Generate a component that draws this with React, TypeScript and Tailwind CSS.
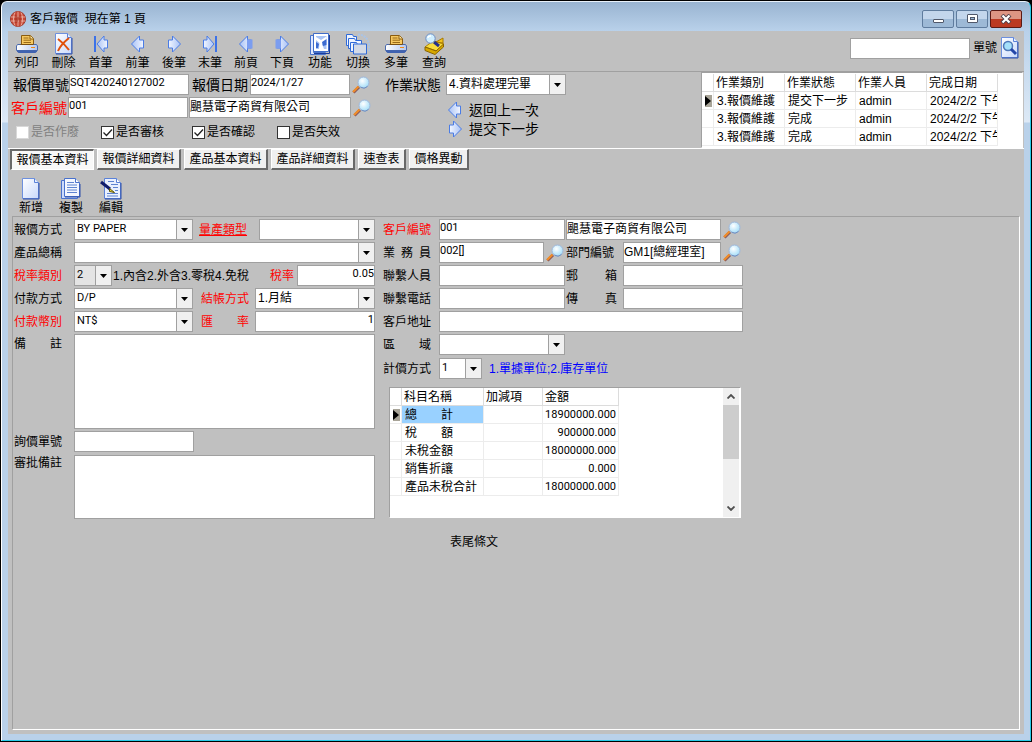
import React, { useState } from 'react'

const latin = "text-[11px] font-['Roboto','Noto_Sans_CJK_TC',sans-serif]"

/* ---------- icons ---------- */

function PrinterIcon() {
  return (
    <svg width="22" height="20" viewBox="0 0 22 20" aria-hidden="true">
      <defs>
        <linearGradient id="tray" x1="0" x2="1">
          <stop offset="0" stopColor="#ffffff" />
          <stop offset="1" stopColor="#b4c8ee" />
        </linearGradient>
      </defs>
      <path d="M5.500 10.500v-9h9l3 3v6z" fill="#f6c860" stroke="#8a5c10" />
      <path d="M14 1.500v3.500h3.500" fill="#ffe9a8" stroke="#8a5c10" />
      <path d="M7.500 4h5M7.500 6.200h7.500M7.500 8.500h7.500" stroke="#9a6a18" />
      <path d="M1.500 10.500h19l1 1.500v4.500H.5V12z" fill="url(#tray)" stroke="#4a69ac" />
      <path d="M4.500 10.500h13" stroke="#7a5010" />
      <path d="M15 13.500h4" stroke="#f08a1c" />
      <path d="M1 16.500h20v1l-1.500 1.500H2.500L1 17.500z" fill="#3f62b0" />
    </svg>
  )
}

function Page({ children }: { children?: React.ReactNode }) {
  return (
    <svg width="20" height="22" viewBox="0 0 20 22" aria-hidden="true">
      <defs>
        <linearGradient id="paper" x1="0" y1="0" x2="1" y2="1">
          <stop offset="0" stopColor="#ffffff" />
          <stop offset="1" stopColor="#c9d9fb" />
        </linearGradient>
      </defs>
      <path d="M1.500.5h12l4 4v16h-16z" fill="url(#paper)" stroke="#6d90de" />
      <path d="M18 5v16H2" fill="none" stroke="#2f4fa8" />
      <path d="M13.500.5v4h4" fill="#e6efff" stroke="#5b82d8" />
      {children}
    </svg>
  )
}

function DeleteIcon() {
  return (
    <Page>
      <path d="M4 6c4 3 8 7 11 11M15 5C10 9 6 13 4 18" fill="none" stroke="#e0500c" strokeWidth="2" />
    </Page>
  )
}

function EditIcon() {
  return (
    <svg width="22" height="22" viewBox="0 0 22 22" aria-hidden="true">
      <path d="M4.500.5h12l4 4v16h-16z" fill="#eaf1ff" stroke="#5b82d8" />
      <path d="M21 5v16H5" fill="none" stroke="#2f4fa8" />
      <path d="M16.500.5v4h4" fill="#fff" stroke="#5b82d8" />
      <path d="M8 3.500h6M11 6.500h7M13 9.500h5M15 12.500h3M7 15.500h11M7 18h11" stroke="#5f84d0" />
      <path d="M1 4l9 7" stroke="#101c6c" strokeWidth="3" />
      <path d="M9.500 10.500l5 4-5-1z" fill="#ecd934" stroke="#5a5206" />
    </svg>
  )
}

function CopyIcon() {
  return (
    <svg width="20" height="22" viewBox="0 0 20 22" aria-hidden="true">
      <path d="M.5 2.500h4v16h12v2H.5z" fill="#cddbfa" stroke="#4a72cc" />
      <path d="M3.500.5h11l4 4v14h-15z" fill="#f3f7ff" stroke="#4a72cc" />
      <path d="M14.500.5v4h4" fill="#fff" stroke="#4a72cc" />
      <path d="M6 4.500h7M6 7h10M6 9.500h10M6 12h10M6 14.500h10" stroke="#5f84d0" />
      <path d="M19 6v13H4" fill="none" stroke="#2f4fa8" />
    </svg>
  )
}

type ArrowProps = { dir: 'left' | 'right'; bar?: boolean; solid?: boolean }

function ArrowIcon({ dir, bar, solid }: ArrowProps) {
  return (
    <svg width="16" height="18" viewBox="0 0 16 18" aria-hidden="true">
      <defs>
        <linearGradient id="arrow" x1="0" x2="1">
          <stop offset="0" stopColor="#a9c2f6" />
          <stop offset="1" stopColor="#f2f6ff" />
        </linearGradient>
      </defs>
      <g transform={dir === 'right' ? 'matrix(-1 0 0 1 16 0)' : undefined}>
        {bar && <path d="M2 1v16" stroke="#3c72e8" strokeWidth="2" />}
        <path
          d={bar ? 'M4 9l7-8v4h3.500v8H11v4z' : 'M1.500 9l8-8v4h4v8h-4v4z'}
          fill="url(#arrow)"
          stroke="#4a7ce6"
        />
        {solid && <path d="M9 4.500h5.500v9H9z" fill="#7b9df0" />}
      </g>
    </svg>
  )
}

function FunctionIcon() {
  return (
    <svg width="20" height="22" viewBox="0 0 20 22" aria-hidden="true">
      <path d="M.5 2.500h3v17h12v2H.5z" fill="#dfe8ff" stroke="#4a74cc" />
      <path d="M3.500.5h15v18h-15z" fill="#ffffff" stroke="#3f6cc8" />
      <path d="M19.500 2v18.500H4" fill="none" stroke="#1c3d9a" />
      <path d="M6 3h10.500v13H6z" fill="#a9c4f6" />
      <path d="M6 4l5 3 5.500-3.500V7L12 11l2 5H9l.5-6L6 7z" fill="#ffffff" />
      <path d="M12 9l4.500-3v6L13 13zM6 9l3 2-1 4H6z" fill="#3c6bd0" />
    </svg>
  )
}

function SwitchIcon() {
  return (
    <svg width="24" height="22" viewBox="0 0 24 22" aria-hidden="true">
      <path d="M12 1.500c6 0 10 4 11 10v7" fill="none" stroke="#a9c4e8" strokeWidth="2" strokeDasharray="2 1" />
      <g stroke="#2f6ad8" fill="#eef4ff">
        <path d="M.5 12.500v-11h6l1 2h3v9z" />
        <path d="M2.500 15.500v-10h6l1 2h6v8z" />
        <path d="M4.500 18.500v-9h6l1 2h7v7z" />
        <path d="M7.500 21v-10h13V21z" fill="#d3dae6" />
      </g>
    </svg>
  )
}

function QueryIcon() {
  return (
    <svg width="21" height="22" viewBox="0 0 21 22" aria-hidden="true">
      <path d="M1 14l8-6 11 3-7 7z" fill="#f8dc3c" stroke="#b08400" />
      <path d="M1 14v3.500l10 4 8.500-7.500v-3L12 18z" fill="#d8a800" stroke="#8a6400" />
      <path d="M12 9l7-4v5z" fill="#f2c21c" stroke="#a87a00" />
      <path d="M10 9l5 4" stroke="#24308c" strokeWidth="3" />
      <circle cx="6.500" cy="5.500" r="4.700" fill="#cfeeff" stroke="#6e8cc0" />
      <path d="M4 5c0-2 1-2 3-2" fill="none" stroke="#fff" strokeWidth="1.500" />
    </svg>
  )
}

function LensIcon() {
  return (
    <svg width="19" height="18" viewBox="0 0 19 18" aria-hidden="true">
      <defs>
        <radialGradient id="lens" cx=".4" cy=".35" r=".7">
          <stop offset="0" stopColor="#ffffff" />
          <stop offset="1" stopColor="#9fdcf8" />
        </radialGradient>
      </defs>
      <path d="M1.500 16.500l5.500-5.500" stroke="#8a5a5c" strokeWidth="3" />
      <path d="M1 16l5.500-5.500" stroke="#f08c28" strokeWidth="2.200" />
      <circle cx="11.500" cy="6.500" r="5.500" fill="url(#lens)" stroke="#9fb8dc" />
      <path d="M15.500 10.500a5.500 5.500 0 0 1-7 .6" fill="none" stroke="#6f8fc0" />
    </svg>
  )
}

function SearchPageIcon() {
  return (
    <Page>
      <circle cx="8" cy="9" r="4.500" fill="#a5e0fa" stroke="#4f78b8" strokeWidth="1.500" />
      <path d="M11 12l5 5" stroke="#2446a8" strokeWidth="3" />
    </Page>
  )
}

function GlobeIcon() {
  return (
    <svg width="16" height="16" viewBox="0 0 16 16" aria-hidden="true">
      <circle cx="8" cy="8" r="7.500" fill="#c84a38" stroke="#a33a2c" />
      <path
        d="M1 6h14M1 10h14M8 .5v15M5 1.500c-2 4-2 9 0 13M11 1.500c2 4 2 9 0 13"
        fill="none"
        stroke="#eebfb4"
        strokeWidth=".8"
      />
      <path d="M5 3l3 3 3-3v8H9V8L7 12H5z" fill="#a6301f" opacity=".6" />
    </svg>
  )
}

/* ---------- form parts ---------- */

type TextBoxProps = { id: string; value?: string; width: string; right?: boolean; label?: string; cjk?: boolean }

function TextBox({ id, value = '', width, right, label, cjk }: TextBoxProps) {
  return (
    <input
      id={id}
      aria-label={label}
      defaultValue={value}
      className={`h-[21px] shrink-0 rounded-none border border-[#a0a0a0] bg-white pb-1 leading-4 outline-none ${
        cjk ? 'text-[12px]' : latin
      } ${right ? 'text-right' : ''} ${width}`}
    />
  )
}

type ComboProps = { id: string; value?: string; width: string; cjk?: boolean; grey?: boolean; label?: string }

function Combo({ id, value = '', width, cjk, grey, label }: ComboProps) {
  return (
    <span className={`relative h-[21px] shrink-0 ${width}`}>
      <select
        id={id}
        aria-label={label}
        defaultValue={value}
        className={`block h-full w-full appearance-none rounded-none border border-r-2 border-[#a0a0a0] pr-4 pb-0.5 pl-0.5 leading-4 outline-none ${
          grey ? 'bg-[#e4e4e4]' : 'bg-white'
        } ${cjk ? 'text-[12px]' : latin}`}
      >
        <option value={value}>{value}</option>
      </select>
      <span className="pointer-events-none absolute inset-y-px right-px flex w-4 items-center justify-center border-l border-[#a0a0a0] bg-[#f0f0f0]">
        <svg width="7" height="4" viewBox="0 0 7 4" aria-hidden="true">
          <path d="M0 0h7L3.500 4z" fill="#000" />
        </svg>
      </span>
    </span>
  )
}

type LabelProps = { htmlFor: string; className?: string; red?: boolean; children: React.ReactNode }

function Label({ htmlFor, className = '', red, children }: LabelProps) {
  return (
    <label htmlFor={htmlFor} className={`shrink-0 whitespace-nowrap ${red ? 'text-[#ff0000]' : ''} ${className}`}>
      {children}
    </label>
  )
}

function LensButton({ label }: { label: string }) {
  return (
    <button type="button" aria-label={label} className="ml-0.5 shrink-0">
      <LensIcon />
    </button>
  )
}

function Row({ children }: { children: React.ReactNode }) {
  return <div className="flex h-[21px] items-center">{children}</div>
}

type TickProps = { label: string; checked?: boolean; disabled?: boolean; width: string }

function Tick({ label, checked, disabled, width }: TickProps) {
  return (
    <label className={`relative flex items-center gap-0.5 whitespace-nowrap ${disabled ? 'text-[#808080]' : ''} ${width}`}>
      <input
        type="checkbox"
        defaultChecked={checked}
        disabled={disabled}
        className={`peer size-[13px] appearance-none border bg-white ${disabled ? 'border-[#d8d8d8]' : 'border-[#333333]'}`}
      />
      <svg
        width="13"
        height="13"
        viewBox="0 0 13 13"
        aria-hidden="true"
        className="pointer-events-none absolute left-0 hidden peer-checked:block"
      >
        <path d="M2.500 6.500l3 3 5.500-6" fill="none" stroke="#222" strokeWidth="1.300" />
      </svg>
      {label}
    </label>
  )
}

function ToolButton({ label, width, children }: { label: string; width: string; children: React.ReactNode }) {
  return (
    <button type="button" className={`flex shrink-0 flex-col items-center ${width}`}>
      <span className="flex h-[22px] items-center justify-center">{children}</span>
      <span className="h-4 leading-4 whitespace-nowrap">{label}</span>
    </button>
  )
}

const marker = (
  <span className="flex h-3 w-[7px] items-center bg-[#a8a498]">
    <svg width="6" height="10" viewBox="0 0 6 10" aria-hidden="true">
      <path d="M0 0l6 5-6 5z" fill="#000" />
    </svg>
  </span>
)

/* ---------- data ---------- */

const steps = [
  ['3.報價維護', '提交下一步', 'admin', '2024/2/2 下午'],
  ['3.報價維護', '完成', 'admin', '2024/2/2 下午'],
  ['3.報價維護', '完成', 'admin', '2024/2/2 下午'],
]

const totals = [
  ['總　　計', '18900000.000'],
  ['稅　　額', '900000.000'],
  ['未稅金額', '18000000.000'],
  ['銷售折讓', '0.000'],
  ['產品未稅合計', '18000000.000'],
]

const tabs = [
  { name: '報價基本資料', width: 'w-[84px]' },
  { name: '報價詳細資料', width: 'w-[84px]' },
  { name: '產品基本資料', width: 'w-[84px]' },
  { name: '產品詳細資料', width: 'w-[84px]' },
  { name: '速查表', width: 'w-[48px]' },
  { name: '價格異動', width: 'w-[60px]' },
]

const head = 'h-[18px] border-r border-b border-[#dcdcdc] p-0 pl-0.5 text-left font-normal whitespace-nowrap'
const cell = 'h-[18px] overflow-hidden border-r border-b border-[#ececec] p-0 whitespace-nowrap'

/* ---------- page sections ---------- */

function TitleBar() {
  const box = 'flex h-[18px] w-8 items-center justify-center rounded-[2px] border border-[#5f7c9e]'
  return (
    <header className="flex h-[29px] shrink-0 items-center pt-1 pr-0.5 pl-0.5">
      <GlobeIcon />
      <h1 className="ml-1 flex-1 text-[12px] whitespace-pre">客戶報價  現在第 1 頁</h1>
      <div className="flex gap-0.5">
        <button type="button" aria-label="最小化" className={`${box} bg-linear-to-b from-[#c3d6ec] from-50% to-[#9db9d6] to-50%`}>
          <span className="mt-1 h-1 w-[11px] rounded-[1px] border border-[#50586a] bg-white" />
        </button>
        <button type="button" aria-label="最大化" className={`${box} bg-linear-to-b from-[#c3d6ec] from-50% to-[#9db9d6] to-50%`}>
          <span className="flex h-[9px] w-[11px] items-center justify-center rounded-[1px] border border-[#50586a] bg-white">
            <span className="h-[3px] w-[5px] border border-[#50586a] bg-[#9db9d6]" />
          </span>
        </button>
        <button
          type="button"
          aria-label="關閉"
          className="flex h-[18px] w-8 items-center justify-center rounded-[2px] border border-[#5a1a14] bg-linear-to-b from-[#dd9583] from-50% to-[#bb3a22] to-50%"
        >
          <svg width="12" height="10" viewBox="0 0 12 10" aria-hidden="true">
            <path d="M2 1l8 8M10 1L2 9" stroke="#50404a" strokeWidth="4" />
            <path d="M2.500 1.500l7 7M9.500 1.500l-7 7" stroke="#fff" strokeWidth="2.200" />
          </svg>
        </button>
      </div>
    </header>
  )
}

function MainToolbar() {
  const [query, setQuery] = useState('')
  return (
    <div className="flex h-[41px] shrink-0 border-b border-[#a0a0a0] pt-0.5">
      <div className="flex">
        <ToolButton label="列印" width="w-[37px]"><PrinterIcon /></ToolButton>
        <ToolButton label="刪除" width="w-[37px]"><DeleteIcon /></ToolButton>
        <ToolButton label="首筆" width="w-[37px]"><ArrowIcon dir="left" bar /></ToolButton>
        <ToolButton label="前筆" width="w-[37px]"><ArrowIcon dir="left" /></ToolButton>
      </div>
      <div className="flex">
        <ToolButton label="後筆" width="w-9"><ArrowIcon dir="right" /></ToolButton>
        <ToolButton label="末筆" width="w-9"><ArrowIcon dir="right" bar /></ToolButton>
        <ToolButton label="前頁" width="w-9"><ArrowIcon dir="left" solid /></ToolButton>
        <ToolButton label="下頁" width="w-9"><ArrowIcon dir="right" solid /></ToolButton>
      </div>
      <div className="ml-px flex">
        <ToolButton label="功能" width="w-[38px]"><FunctionIcon /></ToolButton>
        <ToolButton label="切換" width="w-[38px]"><SwitchIcon /></ToolButton>
        <ToolButton label="多筆" width="w-[38px]"><PrinterIcon /></ToolButton>
        <ToolButton label="查詢" width="w-[38px]"><QueryIcon /></ToolButton>
      </div>
      <div className="ml-auto flex items-center gap-[3px] pr-1 pb-2">
        <input
          id="find"
          value={query}
          onChange={(e) => setQuery(e.target.value)}
          className="h-[21px] w-[120px] border border-[#a0a0a0] bg-white px-px outline-none"
        />
        <Label htmlFor="find">單號</Label>
        <button type="button" aria-label="搜尋"><SearchPageIcon /></button>
      </div>
    </div>
  )
}

function DocumentHeader() {
  return (
    <section className="flex h-[77px] shrink-0 border-b border-white">
      <div className="flex flex-col gap-0.5 pt-0.5">
        <Row>
          <Label htmlFor="quoteNo" className="w-[61px] pl-[5px] text-[14px]">報價單號</Label>
          <TextBox id="quoteNo" value="SQT420240127002" width="w-[120px]" />
          <Label htmlFor="quoteDate" className="w-[61px] pl-[3px] text-[14px]">報價日期</Label>
          <TextBox id="quoteDate" value="2024/1/27" width="w-[100px]" />
          <LensButton label="選擇日期" />
        </Row>
        <Row>
          <Label htmlFor="customer" red className="w-[60px] pl-[3px] text-[14px]">客戶編號</Label>
          <TextBox id="customer" value="001" width="w-[120px]" />
          <span className="ml-px flex">
            <TextBox id="customerName" label="客戶名稱" value="颶慧電子商貿有限公司" cjk width="w-[162px]" />
          </span>
          <LensButton label="選擇客戶" />
        </Row>
        <div className="flex h-6 items-center pl-2">
          <Tick label="是否作廢" disabled width="w-[85px]" />
          <Tick label="是否審核" checked width="w-[91px]" />
          <Tick label="是否確認" checked width="w-[85px]" />
          <Tick label="是否失效" width="w-[70px]" />
        </div>
      </div>
      <div className="ml-[13px] flex flex-col pt-0.5 text-[14px]">
        <Row>
          <Label htmlFor="status" className="w-[61px]">作業狀態</Label>
          <Combo id="status" value="4.資料處理完畢" cjk width="w-[120px]" />
        </Row>
        <button type="button" className="mt-[5px] ml-[62px] flex h-[19px] items-center gap-1.5 whitespace-nowrap">
          <ArrowIcon dir="left" />
          返回上一次
        </button>
        <button type="button" className="ml-[62px] flex h-[19px] items-center gap-1.5 whitespace-nowrap">
          <ArrowIcon dir="right" />
          提交下一步
        </button>
      </div>
      <div className="mr-px ml-auto w-[322px] border border-[#a0a0a0] border-r-white border-b-white bg-white pt-px">
        <table className="w-[296px] table-fixed border-separate border-spacing-0">
          <thead>
            <tr>
              <th className={`${head} w-3`} />
              <th className={head}>作業類別</th>
              <th className={head}>作業狀態</th>
              <th className={head}>作業人員</th>
              <th className={head}>完成日期</th>
            </tr>
          </thead>
          <tbody>
            {steps.map((s, i) => (
              <tr key={i}>
                <td className={`${cell} pl-[3px]`}>{i === 0 && marker}</td>
                {s.map((v, j) => (
                  <td key={j} className={`${cell} pl-[3px]`}>{v}</td>
                ))}
              </tr>
            ))}
          </tbody>
        </table>
      </div>
    </section>
  )
}

function LeftFields() {
  const first = 'w-[61px] pl-px'
  return (
    <div className="flex w-[362px] shrink-0 flex-col gap-0.5">
      <Row>
        <Label htmlFor="mode" className={first}>報價方式</Label>
        <Combo id="mode" value="BY PAPER" width="w-[119px]" />
        <Label htmlFor="volume" red className="w-[66px] pl-1.5 underline underline-offset-1">量產類型</Label>
        <Combo id="volume" width="w-[116px]" />
      </Row>
      <Row>
        <Label htmlFor="product" className={first}>產品總稱</Label>
        <Combo id="product" width="w-[301px]" />
      </Row>
      <Row>
        <Label htmlFor="taxType" red className={first}>稅率類別</Label>
        <Combo id="taxType" value="2" grey width="w-[38px]" />
        <span className="w-[158px] shrink-0 pl-px whitespace-nowrap">1.內含2.外含3.零稅4.免稅</span>
        <Label htmlFor="taxRate" red className="w-[27px]">稅率</Label>
        <TextBox id="taxRate" value="0.05" right width="w-[78px]" />
      </Row>
      <Row>
        <Label htmlFor="pay" className={first}>付款方式</Label>
        <Combo id="pay" value="D/P" width="w-[119px]" />
        <Label htmlFor="settle" red className="w-[62px] pl-2">結帳方式</Label>
        <Combo id="settle" value="1.月結" cjk width="w-[120px]" />
      </Row>
      <Row>
        <Label htmlFor="currency" red className={first}>付款幣別</Label>
        <Combo id="currency" value="NT$" width="w-[119px]" />
        <Label htmlFor="rate" red className="w-[62px] pl-2">匯　　率</Label>
        <TextBox id="rate" value="1" right width="w-[120px]" />
      </Row>
      <div className="flex">
        <Label htmlFor="remark" className={`${first} leading-[21px]`}>備　　註</Label>
        <textarea id="remark" className="h-[95px] w-[301px] resize-none border border-[#a0a0a0] bg-white outline-none" />
      </div>
      <Row>
        <Label htmlFor="inquiry" className={first}>詢價單號</Label>
        <TextBox id="inquiry" width="w-[120px]" />
      </Row>
      <div className="mt-px flex">
        <Label htmlFor="review" className={`${first} leading-4`}>審批備註</Label>
        <textarea id="review" className="h-16 w-[301px] resize-none border border-[#a0a0a0] bg-white outline-none" />
      </div>
    </div>
  )
}

function TotalsTable() {
  return (
    <div className="mt-1.5 ml-1.5 flex h-[131px] w-[352px] border border-[#a0a0a0] border-r-white border-b-white bg-white">
      <div className="flex-1">
        <table className="w-[229px] table-fixed border-separate border-spacing-0">
          <thead>
            <tr>
              <th className={`${head} w-3`} />
              <th className={`${head} w-[82px]`}>科目名稱</th>
              <th className={`${head} w-[59px]`}>加減項</th>
              <th className={head}>金額</th>
            </tr>
          </thead>
          <tbody>
            {totals.map(([name, amount], i) => (
              <tr key={name}>
                <td className={`${cell} pl-[3px]`}>{i === 0 && marker}</td>
                <td className={`${cell} pl-[3px] ${i === 0 ? 'bg-[#99d1ff]' : ''}`}>{name}</td>
                <td className={cell} />
                <td className={`${cell} pr-0.5 text-right leading-4 ${latin}`}>{amount}</td>
              </tr>
            ))}
          </tbody>
        </table>
      </div>
      <div className="mr-px flex w-4 flex-col items-center bg-[#f0f0f0] pb-1.5">
        <span className="flex h-[17px] items-center">
          <svg width="8" height="5" viewBox="0 0 8 5" aria-hidden="true">
            <path d="M.5 4.500L4 1l3.500 3.500" fill="none" stroke="#505050" strokeWidth="1.800" />
          </svg>
        </span>
        <span className="h-[54px] w-full bg-[#cdcdcd]" />
        <svg className="mt-auto" width="8" height="5" viewBox="0 0 8 5" aria-hidden="true">
          <path d="M.5.5L4 4 7.500.5" fill="none" stroke="#505050" strokeWidth="1.800" />
        </svg>
      </div>
    </div>
  )
}

function RightFields() {
  const first = 'w-14'
  return (
    <div className="ml-2 flex flex-col gap-0.5">
      <Row>
        <Label htmlFor="cust" red className={first}>客戶編號</Label>
        <TextBox id="cust" value="001" width="w-[126px]" />
        <span className="ml-px flex">
          <TextBox id="custName" label="客戶名稱" value="颶慧電子商貿有限公司" cjk width="w-[155px]" />
        </span>
        <LensButton label="選擇客戶" />
      </Row>
      <Row>
        <Label htmlFor="sales" className={first}>業&ensp;務&ensp;員</Label>
        <TextBox id="sales" value="002[]" width="w-[105px]" />
        <LensButton label="選擇業務員" />
        <Label htmlFor="dept" className="w-[58px] pl-px">部門編號</Label>
        <TextBox id="dept" value="GM1[總經理室]" cjk width="w-[98px]" />
        <LensButton label="選擇部門" />
      </Row>
      <Row>
        <Label htmlFor="contact" className={first}>聯繫人員</Label>
        <TextBox id="contact" width="w-[126px]" />
        <Label htmlFor="mail" className="flex w-[58px] justify-between pr-1.5 pl-px"><span>郵</span><span>箱</span></Label>
        <TextBox id="mail" width="w-[120px]" />
      </Row>
      <Row>
        <Label htmlFor="phone" className={first}>聯繫電話</Label>
        <TextBox id="phone" width="w-[126px]" />
        <Label htmlFor="fax" className="flex w-[58px] justify-between pr-1.5 pl-px"><span>傳</span><span>真</span></Label>
        <TextBox id="fax" width="w-[120px]" />
      </Row>
      <Row>
        <Label htmlFor="address" className={first}>客戶地址</Label>
        <TextBox id="address" width="w-[304px]" />
      </Row>
      <Row>
        <Label htmlFor="region" className={first}>區　　域</Label>
        <Combo id="region" width="w-[126px]" />
      </Row>
      <div className="mt-px flex h-[21px] items-center">
        <Label htmlFor="pricing" className={first}>計價方式</Label>
        <Combo id="pricing" value="1" width="w-[43px]" />
        <span className="ml-[7px] text-[#0000ff]">1.單據單位;2.庫存單位</span>
      </div>
      <TotalsTable />
      <p className="mt-3.5 ml-[67px] leading-4">表尾條文</p>
    </div>
  )
}

export default function App() {
  const [active, setActive] = useState(0)
  return (
    <div className="flex min-h-screen bg-black p-px font-['Liberation_Sans','Noto_Sans_CJK_TC',sans-serif] text-[12px] leading-4 text-black">
      <div className="flex min-w-0 flex-1 flex-col rounded-t-[6px] border border-t-[#e8f1fa] border-r-[#29cbe8] border-b-[#29cbe8] border-l-white bg-[linear-gradient(#99b4d1_0,#b9d1ea_29px,#dde9f6_120px,#b9d1ea_121px)] px-1.5 pb-1.5">
        <TitleBar />
        <main className="flex flex-1 flex-col bg-[#c0c0c0]">
          <MainToolbar />
          <DocumentHeader />
          <div role="tablist" className="flex shrink-0 gap-[3px] pl-0.5">
            {tabs.map((t, i) => (
              <button
                key={t.name}
                type="button"
                role="tab"
                aria-selected={i === active}
                onClick={() => setActive(i)}
                className={`h-[21px] border whitespace-nowrap ${t.width} ${
                  i === active
                    ? 'border-t-2 border-l-2 border-white border-t-[#696969] border-l-[#696969] bg-[#f8f8f8]'
                    : 'border-r-2 border-b-2 border-white border-r-[#696969] border-b-[#696969] bg-[#f0f0f0]'
                }`}
              >
                {t.name}
              </button>
            ))}
          </div>
          <div className="flex h-[46px] shrink-0 pt-2 pl-[3px]">
            <ToolButton label="新增" width="w-10"><Page /></ToolButton>
            <ToolButton label="複製" width="w-10"><CopyIcon /></ToolButton>
            <ToolButton label="編輯" width="w-10"><EditIcon /></ToolButton>
          </div>
          <section className="mr-1 mb-1 ml-1 flex flex-1 border border-[#a0a0a0] border-r-white border-b-white pt-0.5">
            <LeftFields />
            <RightFields />
          </section>
        </main>
      </div>
    </div>
  )
}
